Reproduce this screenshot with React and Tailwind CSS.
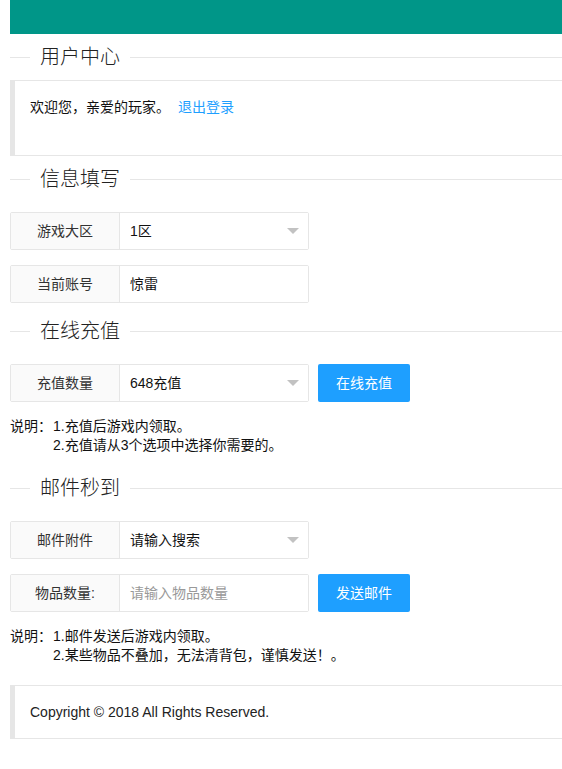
import React from "react";

const FONT = { fontFamily: '"Liberation Sans", "Noto Sans CJK SC", Arial, sans-serif' };

function Title({ children, className = "" }) {
  return (
    <div className={"flex items-center h-[30px] " + className}>
      <span className="w-[20px] h-px bg-[#e6e6e6]" />
      <span className="px-[10px] text-[20px] font-light leading-[30px] text-[#222]">{children}</span>
      <span className="flex-1 h-px bg-[#e6e6e6]" />
    </div>
  );
}

function Row({ label, children, select, button, className = "" }) {
  return (
    <div className={"flex items-center " + className}>
      <div className="flex h-[38px] w-[299px] border border-[#e6e6e6] rounded-[2px]">
        <div className="w-[109px] shrink-0 bg-[#fafafa] border-r border-[#e6e6e6] flex items-center justify-center text-[14px] text-[#333]">
          {label}
        </div>
        <div className="relative flex-1 flex items-center pl-[10px] text-[14px] bg-white">
          {children}
          {select && (
            <span className="absolute right-[9px] top-1/2 -mt-[3px] w-0 h-0 border-l-[6px] border-r-[6px] border-t-[6px] border-l-transparent border-r-transparent border-t-[#c2c2c2]" />
          )}
        </div>
      </div>
      {button && (
        <button className="ml-[9px] h-[38px] px-[18px] bg-[#1E9FFF] text-white text-[14px] rounded-[2px]">
          {button}
        </button>
      )}
    </div>
  );
}

function Notes({ lines, className = "" }) {
  return (
    <div className={"flex text-[14px] leading-[19px] text-[#111] " + className}>
      <span className="w-[43px] shrink-0">说明：</span>
      <div className="flex flex-col">
        {lines.map((l) => (
          <span key={l}>{l}</span>
        ))}
      </div>
    </div>
  );
}

export default function App() {
  return (
    <div className="overflow-hidden bg-white min-h-[769px]" style={FONT}>
      <div className="ml-[10px] w-[620px]">
        <div className="h-[34px] bg-[#009688]" />

        <Title className="mt-[8px]">用户中心</Title>
        <div className="mt-[8px] border border-l-[5px] border-[#e6e6e6] pl-[15px] pt-[15px] pb-[37px] text-[14px] leading-[22px] text-[#111]">
          欢迎您，亲爱的玩家。
          <a className="ml-[8px] text-[#1E9FFF] cursor-pointer">退出登录</a>
        </div>

        <Title className="mt-[8px]">信息填写</Title>
        <Row label="游戏大区" select className="mt-[18px]">
          <span className="text-[#111]">1区</span>
        </Row>
        <Row label="当前账号" className="mt-[15px]">
          <span className="text-[#111]">惊雷</span>
        </Row>

        <Title className="mt-[13px]">在线充值</Title>
        <Row label="充值数量" select button="在线充值" className="mt-[18px]">
          <span className="text-[#111]">648充值</span>
        </Row>
        <Notes
          className="mt-[15px]"
          lines={["1.充值后游戏内领取。", "2.充值请从3个选项中选择你需要的。"]}
        />

        <Title className="mt-[18px]">邮件秒到</Title>
        <Row label="邮件附件" select className="mt-[18px]">
          <span className="text-[#111]">请输入搜索</span>
        </Row>
        <Row label="物品数量:" button="发送邮件" className="mt-[15px]">
          <span className="text-[#999]">请输入物品数量</span>
        </Row>
        <Notes
          className="mt-[15px]"
          lines={["1.邮件发送后游戏内领取。", "2.某些物品不叠加，无法清背包，谨慎发送！。"]}
        />

        <div className="mt-[20px] border border-l-[5px] border-[#e6e6e6] pl-[15px] py-[15px] text-[14px] leading-[22px] text-[#222]">
          Copyright © 2018 All Rights Reserved.
        </div>
      </div>
    </div>
  );
}
